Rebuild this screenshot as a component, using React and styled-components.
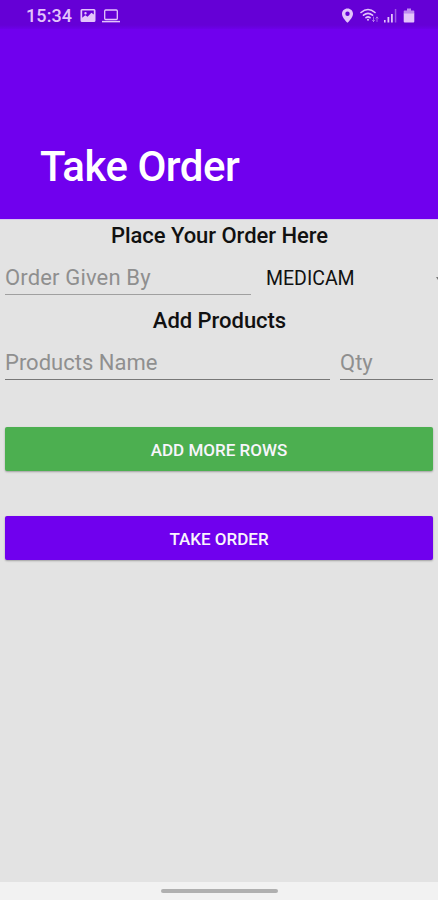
import React from "react";
import styled, { createGlobalStyle } from "styled-components";

const GlobalStyle = createGlobalStyle`
  * { box-sizing: border-box; }
  body { margin: 0; font-family: Roboto, sans-serif; background: #e3e3e3; }
`;

const Screen = styled.div`
  display: flex;
  flex-direction: column;
  width: 438px;
  height: 900px;
  overflow: hidden;
  background: #e3e3e3;
`;

const StatusBar = styled.div`
  display: flex;
  justify-content: space-between;
  height: 29px;
  padding: 0 23px 0 26px;
  background: linear-gradient(#6500d6 0 25px, #6c00e8 29px);
  color: #e3c4fb;
`;

const StatusGroup = styled.div`
  display: flex;
  align-items: center;
  height: 31px;
`;

const Clock = styled.span`
  width: 54px;
  font-size: 18px;
  font-weight: 500;
  letter-spacing: 0.1px;
  white-space: nowrap;
`;

const Icon = styled.svg`
  display: block;
  flex: none;
  margin-left: ${(p) => p.$gap || 0}px;
`;

const AppBar = styled.header`
  display: flex;
  align-items: flex-end;
  height: 190px;
  padding: 0 40px 27px;
  background: #7000ee;
`;

const Title = styled.h1`
  margin: 0;
  color: #fff;
  font-size: 42px;
  line-height: 50px;
  font-weight: 500;
  letter-spacing: -0.5px;
  white-space: nowrap;
`;

const Form = styled.main`
  display: flex;
  flex-direction: column;
  flex: 1;
  padding: 0 5px;
  border-top: 1px solid #d8c6ee;
`;

const Heading = styled.h2`
  margin: 0;
  height: 32px;
  padding-left: 1px;
  font-size: 22px;
  line-height: 32px;
  font-weight: 500;
  text-align: center;
  letter-spacing: -0.03px;
  color: #111;
`;

const FieldRow = styled.div`
  display: flex;
  height: 53px;
  margin-right: -5px;
`;

const Field = styled.input`
  flex: none;
  width: ${(p) => p.$width}px;
  height: 43px;
  margin-right: 10px;
  padding: 9px 0 0;
  border: 0;
  border-bottom: 1px solid ${(p) => p.$line};
  border-radius: 0;
  background: transparent;
  font-family: inherit;
  font-size: 22px;
  letter-spacing: ${(p) => p.$spacing || 0}px;
  outline: 0;
  &:last-child { margin-right: 0; }
  &::placeholder { color: #8f8f8f; opacity: 1; }
`;

const Spinner = styled.div`
  display: flex;
  align-items: center;
  flex: 1;
  height: 53px;
  padding: 0 0 0 5px;
  justify-content: space-between;
  font-size: 19.5px;
  color: #111;
`;

const Button = styled.button`
  height: 44px;
  margin: ${(p) => p.$top}px 0 0;
  padding: 2px 0 0;
  border: 0;
  border-radius: 2px;
  background: ${(p) => p.$fill};
  box-shadow: 0 1px 2px rgba(0, 0, 0, 0.3);
  color: #f8f5fc;
  font-family: inherit;
  font-size: 17px;
  font-weight: 500;
`;

const NavBar = styled.footer`
  display: flex;
  justify-content: center;
  height: 18px;
  padding-top: 7px;
  background: #f2f2f2;
`;

const NavHandle = styled.div`
  width: 117px;
  height: 4px;
  border-radius: 2px;
  background: #b0b0b0;
`;

export default function App() {
  return (
    <Screen>
      <GlobalStyle />
      <StatusBar>
        <StatusGroup>
          <Clock>15:34</Clock>
          <Icon width="16" height="15" viewBox="0 0 16 15">
            <path fill="currentColor" fillRule="evenodd" d="M2 1h12q1.500 0 1.500 1.500v10q0 1.500-1.500 1.500H2Q.5 14 .5 12.500v-10Q.5 1 2 1zm.2 1.600v7.200l3-2.600 2.400 1.500 3.800-4 2.400 1.700V2.600zM5.500 4a1.200 1.200 0 1 1 0 2.400 1.200 1.200 0 0 1 0-2.400z" />
          </Icon>
          <Icon $gap={6} width="18" height="14" viewBox="0 0 18 14" fill="none" stroke="currentColor">
            <rect x="2.700" y="1" width="12.600" height="9.500" rx="1" strokeWidth="1.300" />
            <path d="M0 12.600h18" strokeWidth="1.500" />
          </Icon>
        </StatusGroup>
        <StatusGroup>
          <Icon width="13" height="15" viewBox="0 0 13 15">
            <path fill="currentColor" fillRule="evenodd" d="M6.500.5c3.200 0 5.500 2.300 5.500 5.200 0 3.500-3.300 6.800-5.500 9-2.200-2.200-5.500-5.500-5.500-9C1 2.800 3.300.5 6.500.5zm0 3.100a2.200 2.200 0 1 0 0 4.400 2.200 2.200 0 0 0 0-4.400z" />
          </Icon>
          <Icon $gap={6} width="19" height="15" viewBox="0 0 19 15" fill="none" stroke="currentColor" strokeLinecap="round">
            <path d="M1 4.500Q8 -1.500 15 4.500M3.500 7.200Q8 3.400 12.500 7.200M6 9.700Q8 8 10 9.700" strokeWidth="1.600" />
            <circle cx="8" cy="11.800" r="1" fill="currentColor" stroke="none" />
            <path d="M13.500 9v4.500M12.300 12.200l1.200 1.300 1.200-1.300M17 13.500V9M15.900 10.200L17 9l1.100 1.200" strokeWidth=".8" opacity=".65" />
          </Icon>
          <Icon $gap={4} width="15" height="15" viewBox="0 0 15 15" fill="currentColor">
            <path d="M1 12h1.600v2.500H1zM4.500 9h1.800v5.500H4.500zM8 6h1.800v8.500H8z" />
            <path d="M11.800 1h1.500v13.500h-1.500z" opacity=".45" />
          </Icon>
          <Icon $gap={5} width="12" height="15" viewBox="0 0 12 15" fill="currentColor">
            <path d="M4 .5h4v2h2.500q.8 0 .8.800v2.200H.7V3.300q0-.8.800-.8H4z" opacity=".7" />
            <path d="M.7 5.200h10.600v8.300q0 1-1 1H1.700q-1 0-1-1z" />
          </Icon>
        </StatusGroup>
      </StatusBar>
      <AppBar>
        <Title>Take Order</Title>
      </AppBar>
      <Form>
        <Heading>Place Your Order Here</Heading>
        <FieldRow>
          <Field $width={246} $line="#a0a0a0" $spacing={0.15} placeholder="Order Given By" />
          <Spinner>
            MEDICAM
            <Icon width="2" height="4" viewBox="0 0 2 4"><path d="M0 0h2v3z" fill="#777" /></Icon>
          </Spinner>
        </FieldRow>
        <Heading>Add Products</Heading>
        <FieldRow>
          <Field $width={325} $line="#777" placeholder="Products Name" />
          <Field $width={93} $line="#777" placeholder="Qty" />
        </FieldRow>
        <Button $top={37} $fill="#4caf50">ADD MORE ROWS</Button>
        <Button $top={45} $fill="#7000ee">TAKE ORDER</Button>
      </Form>
      <NavBar><NavHandle /></NavBar>
    </Screen>
  );
}
